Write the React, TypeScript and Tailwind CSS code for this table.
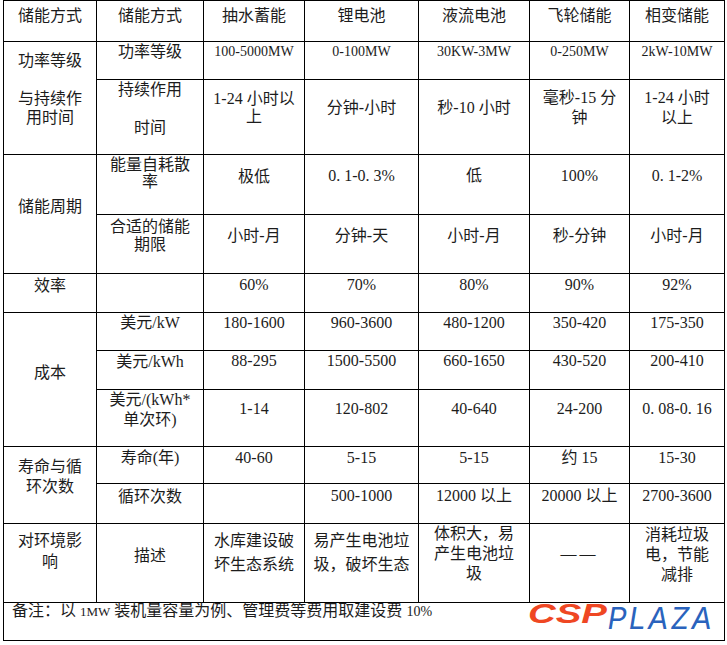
import React from 'react';

// one table cell: centered lines, top padding given per cell
const C = ({ className = '', lines }: { className?: string; lines: React.ReactNode[] }) => (
  <div className={`bg-white text-center ${className}`}>
    {lines.map((l, i) => (
      <div key={i} className="whitespace-nowrap min-h-[1em]">
        {l === '' ? '\u00a0' : l}
      </div>
    ))}
  </div>
);

const App = () => {
  return (
    <div className="w-[727px] h-[645px] bg-white font-['Liberation_Serif','Noto_Sans_CJK_SC',serif] text-[#1c1c1c]">
      <div className="ml-[3px] w-[722px] grid grid-cols-[92px_106px_100px_113px_110px_99px_94px] grid-rows-[40px_37px_74px_59px_58px_38px_37px_38px_56px_36px_39px_78px_37px] gap-px p-px bg-black text-[16px] leading-[19px]">
        {/* header */}
        <C className="pt-[5px]" lines={['储能方式']} />
        <C className="pt-[5px]" lines={['储能方式']} />
        <C className="pt-[5px]" lines={['抽水蓄能']} />
        <C className="pt-[5px]" lines={['锂电池']} />
        <C className="pt-[5px]" lines={['液流电池']} />
        <C className="pt-[5px]" lines={['飞轮储能']} />
        <C className="pt-[5px]" lines={['相变储能']} />

        {/* 功率等级与持续作用时间 */}
        <C className="row-span-2 pt-[9px]" lines={['功率等级', '', '与持续作', '用时间']} />
        <C className="pt-0" lines={['功率等级']} />
        <C className="pt-0 text-[14px]" lines={['100-5000MW']} />
        <C className="pt-0 text-[14px]" lines={['0-100MW']} />
        <C className="pt-0 text-[14px]" lines={['30KW-3MW']} />
        <C className="pt-0 text-[14px]" lines={['0-250MW']} />
        <C className="pt-0 text-[14px]" lines={['2kW-10MW']} />

        <C className="pt-0" lines={['持续作用', '', '时间']} />
        <C className="pt-[10px] leading-[18px]" lines={['1-24 小时以', '上']} />
        <C className="pt-[18px]" lines={['分钟-小时']} />
        <C className="pt-[18px]" lines={['秒-10 小时']} />
        <C className="pt-[8px] leading-[20px]" lines={['毫秒-15 分', '钟']} />
        <C className="pt-[8px] leading-[20px]" lines={['1-24 小时', '以上']} />

        {/* 储能周期 */}
        <C className="row-span-2 pt-[42px]" lines={['储能周期']} />
        <C className="pt-px leading-[17px]" lines={['能量自耗散', '率']} />
        <C className="pt-[12px]" lines={['极低']} />
        <C className="pt-[11px]" lines={['0. 1-0. 3%']} />
        <C className="pt-[11px]" lines={['低']} />
        <C className="pt-[11px]" lines={['100%']} />
        <C className="pt-[11px]" lines={['0. 1-2%']} />

        <C className="pt-[3px] leading-[18px]" lines={['合适的储能', '期限']} />
        <C className="pt-[11px]" lines={['小时-月']} />
        <C className="pt-[11px]" lines={['分钟-天']} />
        <C className="pt-[11px]" lines={['小时-月']} />
        <C className="pt-[11px]" lines={['秒-分钟']} />
        <C className="pt-[11px]" lines={['小时-月']} />

        {/* 效率 */}
        <C className="pt-[2px]" lines={['效率']} />
        <C className="pt-0" lines={['']} />
        <C className="pt-px" lines={['60%']} />
        <C className="pt-px" lines={['70%']} />
        <C className="pt-px" lines={['80%']} />
        <C className="pt-px" lines={['90%']} />
        <C className="pt-px" lines={['92%']} />

        {/* 成本 */}
        <C className="row-span-3 pt-[50px]" lines={['成本']} />
        <C className="pt-0" lines={['美元/kW']} />
        <C className="pt-0" lines={['180-1600']} />
        <C className="pt-0" lines={['960-3600']} />
        <C className="pt-0" lines={['480-1200']} />
        <C className="pt-0" lines={['350-420']} />
        <C className="pt-0" lines={['175-350']} />

        <C className="pt-px" lines={['美元/kWh']} />
        <C className="pt-0" lines={['88-295']} />
        <C className="pt-0" lines={['1500-5500']} />
        <C className="pt-0" lines={['660-1650']} />
        <C className="pt-0" lines={['430-520']} />
        <C className="pt-0" lines={['200-410']} />

        <C className="pt-0 leading-[20px]" lines={['美元/(kWh*', '单次环)']} />
        <C className="pt-[9px]" lines={['1-14']} />
        <C className="pt-[9px]" lines={['120-802']} />
        <C className="pt-[9px]" lines={['40-640']} />
        <C className="pt-[9px]" lines={['24-200']} />
        <C className="pt-[9px]" lines={['0. 08-0. 16']} />

        {/* 寿命与循环次数 */}
        <C className="row-span-2 pt-[10px] leading-[20px]" lines={['寿命与循', '环次数']} />
        <C className="pt-px" lines={['寿命(年)']} />
        <C className="pt-px" lines={['40-60']} />
        <C className="pt-px" lines={['5-15']} />
        <C className="pt-px" lines={['5-15']} />
        <C className="pt-px" lines={['约 15']} />
        <C className="pt-px" lines={['15-30']} />

        <C className="pt-[3px]" lines={['循环次数']} />
        <C className="pt-0" lines={['']} />
        <C className="pt-[2px]" lines={['500-1000']} />
        <C className="pt-[2px]" lines={['12000 以上']} />
        <C className="pt-[2px]" lines={['20000 以上']} />
        <C className="pt-[2px]" lines={['2700-3600']} />

        {/* 对环境影响 */}
        <C className="pt-[6px] leading-[21px]" lines={['对环境影', '响']} />
        <C className="pt-[22px]" lines={['描述']} />
        <C className="pt-[5px] leading-[24px]" lines={['水库建设破', '坏生态系统']} />
        <C className="pt-[5px] leading-[24px]" lines={['易产生电池垃', '圾，破坏生态']} />
        <C className="pt-0 leading-[20px]" lines={['体积大，易', '产生电池垃', '圾']} />
        <C className="pt-[20px] tracking-[3px]" lines={['——']} />
        <C className="pt-px leading-[20px]" lines={['消耗垃圾', '电，节能', '减排']} />

        {/* 备注 */}
        <div className="col-span-7 bg-white flex items-start pl-[8px] pr-[10px]">
          <div className="pt-0 leading-[16px] whitespace-nowrap">
            备注：以 <span className="text-[13px]">1MW</span> 装机量容量为例、管理费等费用取建设费 <span className="text-[14px]">10%</span>
          </div>
          <div className="ml-auto flex items-start">
            <div className="w-[80px] mt-px">
              <span className="inline-block origin-left scale-x-[1.37] text-[28px] leading-[20px] italic font-bold text-[#ef4723] font-['Liberation_Sans',sans-serif]">
                CSP
              </span>
            </div>
            <span className="mt-[4px] text-[30px] leading-[22px] italic font-normal tracking-[2px] text-[#2a63bd] font-['Inter',sans-serif]">
              PLAZA
            </span>
          </div>
        </div>
      </div>
    </div>
  );
};

export default App;
